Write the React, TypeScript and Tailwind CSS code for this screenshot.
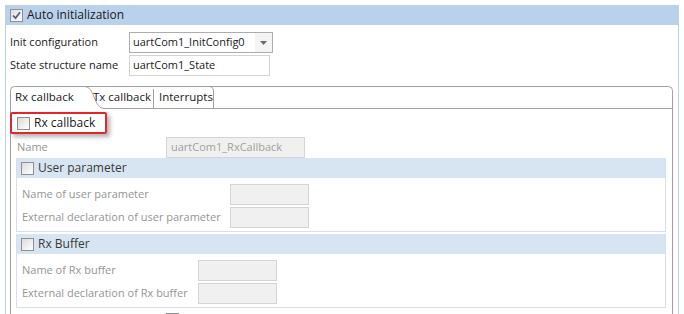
import React from "react"

function CheckBox({ checked = false }: { checked?: boolean }) {
  return (
    <div className="relative h-[13px] w-[13px] shrink-0 border border-[#8f8f8f] bg-[linear-gradient(135deg,#dcdcdc,#ffffff)]">
      {checked && (
        <svg viewBox="0 0 11 11" className="h-[11px] w-[11px]">
          <path d="M2 5.5 L4.5 8.2 L9 2.2" fill="none" stroke="#4a5f97" strokeWidth="1.8" />
        </svg>
      )}
    </div>
  )
}

function DisabledInput({ w, value = "" }: { w: string; value?: string }) {
  return (
    <div className={`flex h-[21px] items-center border border-[#d4d4d4] bg-[#f0f0f0] px-[4px] text-[#a0a0a0] ${w}`}>
      {value}
    </div>
  )
}

function Group({
  title,
  rows,
  labelW,
}: {
  title: string
  rows: string[]
  labelW: string
}) {
  return (
    <div className="border border-t-0 border-[#d5e0ec]">
      <div className="flex h-[20px] items-center gap-[4px] bg-[#d7e4f1] pl-[4px] text-[12px] text-[#3a3a3a]">
        <CheckBox />
        <span>{title}</span>
      </div>
      <div className="flex flex-col gap-[2px] pb-[3px] pl-[5px] pt-[6px]">
        {rows.map((r) => (
          <div key={r} className="flex items-center text-[#959595]">
            <span className={labelW}>{r}</span>
            <DisabledInput w="w-[79px]" />
          </div>
        ))}
      </div>
    </div>
  )
}

export default function App() {
  return (
    <div className="h-[314px] w-[684px] overflow-hidden bg-white pl-[5px] pr-[5px] pt-[5px] font-['Segoe_UI','Open_Sans',sans-serif] text-[11px] text-[#1a1a1a]">
      {/* header bar */}
      <div className="flex h-[20px] items-center gap-[4px] bg-[#b9d1ea] pl-[5px] text-[12px]">
        <CheckBox checked />
        <span>Auto initialization</span>
      </div>

      <div className="h-[300px] border-l border-r border-[#b9d1ea] pl-[4px] pr-[5px] pt-[7px]">
        <div className="flex h-[21px] items-center">
          <span className="w-[119px]">Init configuration</span>
          <div className="flex h-[21px] w-[144px] items-center justify-between border border-[#adadad] bg-white pl-[3px]">
            <span>uartCom1_InitConfig0</span>
            <div className="flex h-full w-[17px] items-center justify-center bg-[#f4f4f4]">
              <svg width="7" height="4" viewBox="0 0 7 4">
                <path d="M0 0 H7 L3.5 4 Z" fill="#6b6b6b" />
              </svg>
            </div>
          </div>
        </div>
        <div className="mt-[2px] flex h-[21px] items-center">
          <span className="w-[119px]">State structure name</span>
          <div className="flex h-[21px] w-[141px] items-center border border-[#d4d4d4] bg-white pl-[3px]">
            uartCom1_State
          </div>
        </div>

        {/* tab folder */}
        <div className="relative mt-[10px]">
          <div className="relative h-[23px]">
            <svg className="absolute inset-0" width="663" height="23" viewBox="0 0 663 23">
              <path
                d="M0.5 23 V4.5 Q0.5 0.5 4.5 0.5 H658.5 Q662.5 0.5 662.5 4.5 V23"
                fill="none"
                stroke="#a0a0a0"
              />
              <path d="M74 0.5 C80 0.5 82 6 84.5 12 C87 18 89 22.5 95 22.5 H663" fill="none" stroke="#a0a0a0" />
              <path d="M143.5 3 V22" stroke="#a0a0a0" />
              <path d="M199 0.5 Q203.5 0.5 203.5 5 V22" fill="none" stroke="#a0a0a0" />
            </svg>
            <div className="relative flex h-[22px] items-center text-[11.5px]">
              <span className="ml-[5px] w-[78px]">Rx callback</span>
              <span className="w-[66px]">Tx callback</span>
              <span>Interrupts</span>
            </div>
          </div>

          <div className="relative h-[220px] border-l border-r border-[#a0a0a0] pl-[5px] pr-[6px] pt-[5px]">
            {/* red annotation box */}
            <div className="absolute left-[-1px] top-[3px] h-[22px] w-[97px] rounded-[2px] border-2 border-[#e3262b] shadow-[3px_3px_4px_rgba(0,0,0,0.3)]" />
            <div className="ml-[1px] flex h-[18px] items-center gap-[4px] text-[12px]">
              <CheckBox />
              <span>Rx callback</span>
            </div>
            <div className="mt-[5px] flex items-center text-[#959595]">
              <span className="ml-[1px] w-[149px]">Name</span>
              <DisabledInput w="w-[139px]" value="uartCom1_RxCallback" />
            </div>
            <div className="flex flex-col gap-[2px]">
              <Group
                title="User parameter"
                rows={["Name of user parameter", "External declaration of user parameter"]}
                labelW="w-[208px]"
              />
              <Group
                title="Rx Buffer"
                rows={["Name of Rx buffer", "External declaration of Rx buffer"]}
                labelW="w-[176px]"
              />
            </div>
            <div className="ml-[150px] mt-[5px] h-[13px] w-[13px] border border-[#8f8f8f]" />
          </div>
        </div>
      </div>
    </div>
  )
}
